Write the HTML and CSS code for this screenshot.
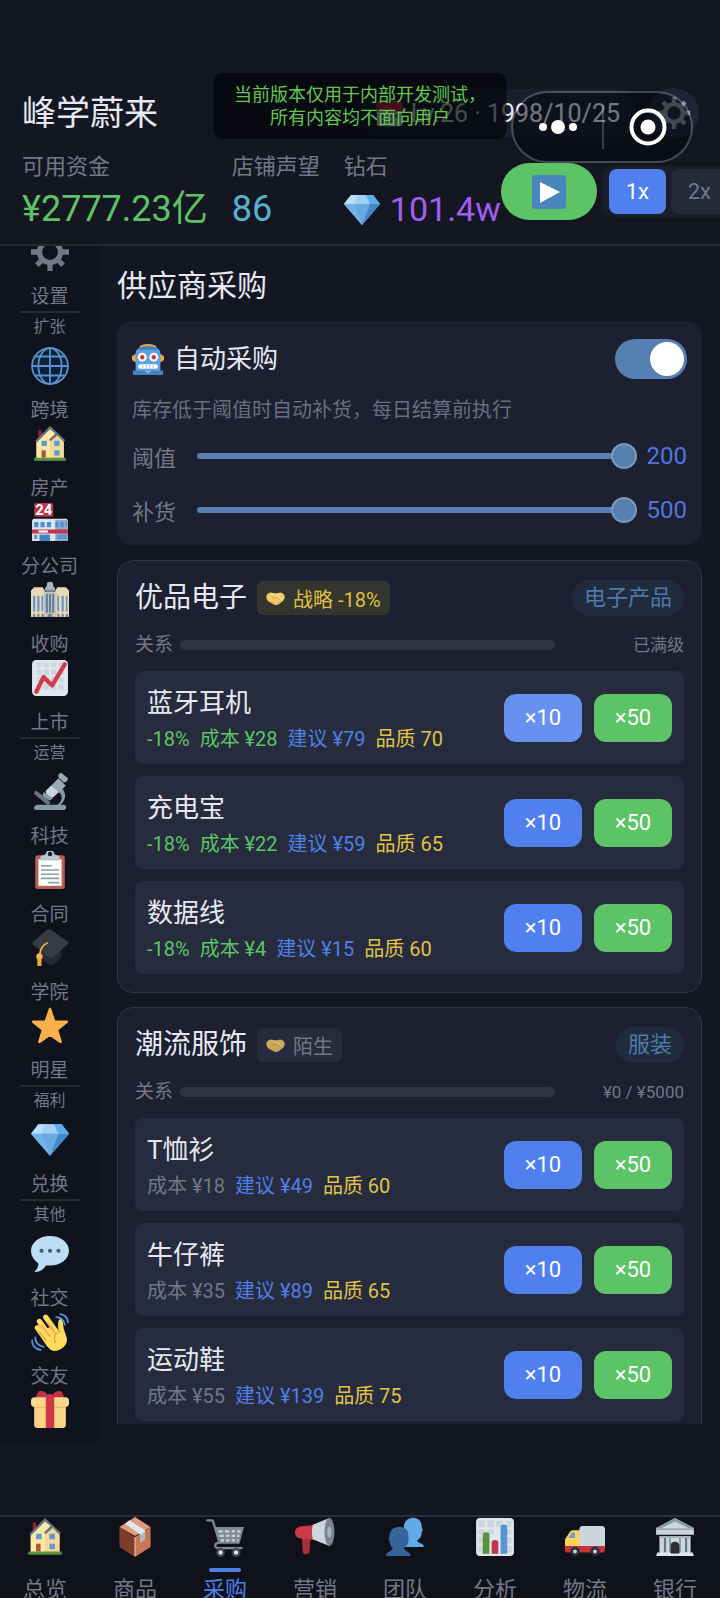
FILE: index.html
```html
<!DOCTYPE html>
<html lang="zh-CN">
<head>
    <meta charset="UTF-8">
    <meta name="viewport" content="width=device-width, initial-scale=1.0">
    <title>供应商采购</title>
    <link rel="stylesheet" href="styles.css">
</head>
<body>
    <!-- iconos compartidos -->
    <svg class="sprite" aria-hidden="true">
        <symbol id="i-gear" viewBox="0 0 36 36">
            <g fill="currentColor">
                <path d="M15.500 0h5v8h-5zM15.500 28h5v8h-5zM0 15.500h8v5H0zM28 15.500h8v5h-8z"/>
                <path d="M3.800 7.300l3.500-3.500 6 6-3.500 3.500zM22.700 26.200l3.500-3.500 6 6-3.500 3.500zM28.700 3.800l3.500 3.500-6 6-3.500-3.500zM9.800 22.700l3.500 3.500-6 6-3.500-3.500z"/>
                <path fill-rule="evenodd" d="M18 5.500a12.500 12.500 0 1 0 0 25 12.500 12.500 0 0 0 0-25zm0 5a7.500 7.500 0 1 1 0 15 7.500 7.500 0 0 1 0-15z"/>
            </g>
        </symbol>
        <symbol id="i-globe" viewBox="0 0 36 36">
            <circle cx="18" cy="18" r="17" fill="#0b2138"/>
            <g fill="none" stroke="#5b93cf" stroke-width="1.700">
                <circle cx="18" cy="18" r="17"/>
                <ellipse cx="18" cy="18" rx="11" ry="17"/>
                <path d="M18 1v34M1 18h34M4 9h28M4 27h28"/>
            </g>
        </symbol>
        <symbol id="i-house" viewBox="0 0 36 36">
            <path fill="#a0212e" d="M7 5h3v8H7z"/>
            <path fill="#ffe8a6" d="M5 32V15L18 2l13 12v18z"/>
            <path fill="#f6d996" d="M18 32V16l7-7 6 6v17z"/>
            <path fill="#66757f" d="M18 1L4 15l1.500 1.500L18 4l5 4-6 6 1.500 1.500L25 10l6 6 1.500-1.500z"/>
            <path fill="#5c913b" d="M3 31h30v3H3z"/>
            <path fill="#5a9bd8" d="M10 15h5v5h-5zM22 15h5v5h-5zM22 24h5v5h-5z"/>
            <path fill="#a5593b" d="M10 24h4v7h-4z"/>
        </symbol>
        <symbol id="i-store" viewBox="0 0 36 36">
            <rect x="3" y="0" width="18" height="13" rx="1.500" fill="#be3448"/>
            <path fill="#dde5ec" d="M1 17l1-2h32l1 2v19H1z"/>
            <path fill="#8fa9c4" d="M23 16h12v20H23z"/>
            <path fill="#4d8fd6" d="M3 18h4v5H3zM9 18h4v5H9zM15 18h4v5h-4zM23 18h3v5h-3zM28 18h3v5h-3zM33 18h1v5h-1z"/>
            <path fill="#c4344c" d="M1 25h34v4H1z"/>
            <path fill="#fff" d="M7 26h9v2H7z"/>
            <path fill="#3f83c8" d="M8 30h10v6H8z"/>
            <path fill="#5e95cf" d="M3 30h3v4H3zM25 30h9v4h-9z"/>
            <text x="4" y="11" class="store-num">24</text>
        </symbol>
        <symbol id="i-hall" viewBox="0 0 36 36">
            <path fill="#ead9b8" d="M0 9l3-3h8l2 3v25H0zM23 9l2-3h8l3 3v25H23z"/>
            <path fill="#c9c5bd" d="M12 10h12v24H12z"/>
            <path fill="#aab8c2" d="M13 9c0-3 2-5 5-5s5 2 5 5zM15 3c0-3 6-3 6 0v2h-6z"/>
            <path fill="#8795a0" d="M14 8h8v2h-8z"/>
            <path fill="#5c96cf" d="M2 14h2v15H2zM6 14h2v15H6zM10 14h1.500v15H10zM25 14h1.500v15H25zM29 14h2v15h-2zM33 14h1.500v15H33z"/>
            <path fill="#5f7f9f" d="M14 12h2v18h-2zM17 12h2v18h-2zM20 12h2v18h-2z"/>
            <path fill="#7f868c" d="M2 31h2v3H2zM6 31h2v3H6zM10 31h2v3h-2zM16 31h4v3h-4zM25 31h2v3h-2zM29 31h2v3h-2zM33 31h2v3h-2z"/>
        </symbol>
        <symbol id="i-trend" viewBox="0 0 36 36">
            <rect x="1" y="1" width="34" height="34" rx="4" fill="#e1e8ed"/>
            <path fill="#ccd6dd" d="M5 3h5v5H5zM12 3h5v5h-5zM19 3h5v5h-5zM26 3h5v5h-5zM5 10h5v5H5zM12 10h5v5h-5zM19 10h5v5h-5zM26 10h5v5h-5zM5 17h5v5H5zM12 17h5v5h-5zM19 17h5v5h-5zM26 17h5v5h-5zM5 24h5v5H5zM12 24h5v5h-5zM19 24h5v5h-5zM26 24h5v5h-5z"/>
            <path fill="none" stroke="#d03a4b" stroke-width="4" stroke-linecap="round" stroke-linejoin="round" d="M5 31l7-14 8 8L32 5"/>
        </symbol>
        <symbol id="i-scope" viewBox="0 0 36 36">
            <path fill="#8899a6" d="M6 30h19c6-4 5-11 0-12l2-5c7 4 7 12 1 17h3c3 0 3 5 0 5H5c-3 0-3-4 1-5z"/>
            <path stroke="#66757f" stroke-width="4" stroke-linecap="round" d="M5 19l11 9"/>
            <path fill="#9aaab4" d="M14 17l12-12 7 7-12 11c-3 1-7-2-7-6z"/>
            <path fill="#ccd6dd" d="M14 17l5-5 7 6-5 5c-4 0-7-2-7-6z"/>
            <path fill="#9aaab4" d="M26 1l3-1 6 5-1 3-3 1-5-5z"/>
            <path fill="#8899a6" d="M12 18l9 6-3 2c-4-1-6-3-7-5z"/>
        </symbol>
        <symbol id="i-clip" viewBox="0 0 36 36">
            <rect x="4" y="4" width="28" height="32" rx="2.500" fill="#b5604f"/>
            <path fill="#fff" d="M7 8h22v25H7z"/>
            <path fill="#bac6ce" d="M9 5l5-2a4 4 0 0 1 8 0l5 2v4H9z"/>
            <circle cx="18" cy="2.800" r="2.200" fill="#1d242c"/>
            <path stroke="#8b9ba9" stroke-width="1.600" stroke-linecap="round" d="M10 14h9M10 18h16M10 22h16M10 26h16M17 30h9"/>
        </symbol>
        <symbol id="i-cap" viewBox="0 0 36 36">
            <path fill="#242a2f" d="M9 17l19 1 1 8c-3 5-8 9-12 8-4-3-8-6-8-9z"/>
            <path fill="#353c42" d="M18 0l17 12c1 1 0 2-1 3L21 27c-2 1-3 1-4 0L2 15c-1-1-1-2 0-3L15 1c1-1 2-1 3-1z"/>
            <path fill="none" stroke="#efb04e" stroke-width="1.700" d="M16 13c-5 2-7 5-8 13"/>
            <circle cx="8" cy="26" r="3" fill="#f4b350"/>
            <path fill="#e9a843" d="M6 28h4v7H6z"/>
        </symbol>
        <symbol id="i-star" viewBox="0 0 36 36">
            <path fill="#f8b04a" stroke="#f8b04a" stroke-width="2.500" stroke-linejoin="round" d="M18 2l4 12h12l-9.500 7.500L28 33l-10-7-10 7 3.500-11.500L2 14h12z"/>
        </symbol>
        <symbol id="i-gem" viewBox="0 0 36 36">
            <path fill="#8ccaf7" d="M7 3h22l7 9-18 21L0 12z"/>
            <path fill="#bdddf4" d="M7 3h7l-4 9H0z"/>
            <path fill="#9fd0f5" d="M14 3h8l4 9H10z"/>
            <path fill="#5dadec" d="M22 3h7l7 9H26z"/>
            <path fill="#72b3ea" d="M0 12h10l8 21z"/>
            <path fill="#6aa9e3" d="M10 12h16l-8 21z"/>
            <path fill="#4289c9" d="M26 12h10L18 33z"/>
        </symbol>
        <symbol id="i-bubble" viewBox="0 0 36 36">
            <path fill="#bdddf4" d="M18 1c10 0 18 6 18 14s-8 14-18 14h-4c-2 4-6 6-10 6-1 0-1-1 0-1 2-2 3-4 3-7-4-3-7-7-7-12C0 7 8 1 18 1z"/>
            <g fill="#3f6385"><circle cx="10" cy="15" r="2"/><circle cx="18" cy="15" r="2"/><circle cx="26" cy="15" r="2"/></g>
        </symbol>
        <symbol id="i-wave" viewBox="0 0 36 36">
            <path fill="none" stroke="#ffdc5d" stroke-width="5" stroke-linecap="round" d="M6 14l8 11M8 8l10 14M14 4l10 14"/>
            <path fill="#ffdc5d" d="M7 17L22 12l4 5c0-4-1-9 1-11 2-1 3 0 3 2l1 7 3 9c1 7-6 12-12 12-5-1-9-6-15-19z"/>
            <path fill="none" stroke="#ef9645" stroke-width="1.200" stroke-linecap="round" d="M10 12l8 10M15 9l8 10M8 18l6 8M28 17c-5 2-7 6-5 11"/>
            <path fill="none" stroke="#5496dc" stroke-width="1.700" stroke-linecap="round" d="M28 1c4 1 7 4 7 8M24 4c4 0 7 3 8 7M1 26c0 5 3 8 8 9M4 23c0 5 3 8 8 9"/>
        </symbol>
        <symbol id="i-gift" viewBox="0 0 36 36">
            <path fill="#be3042" d="M18 6C13-1 8-1 7 1 5 3 5 6 4 8h28c-1-2-1-5-3-7-1-2-6-2-11 5z"/>
            <path fill="#f9d585" d="M3 15h30v17c0 2-1 3-3 3H6c-2 0-3-1-3-3z"/>
            <path fill="#efb86b" d="M3 14h30v2H3z"/>
            <rect x="0" y="6" width="36" height="9" rx="3.500" fill="#fdd888"/>
            <path fill="#d0384a" d="M14 5c2-3 6-3 8 0v30h-8z"/>
        </symbol>
        <symbol id="i-robot" viewBox="0 0 36 36">
            <path fill="#f4a83a" d="M8 5c3-5 17-5 20 0zM1 14l4-2v10l-4-2c-2-2-2-4 0-6zM35 14l-4-2v10l4-2c2-2 2-4 0-6z"/>
            <path fill="#5da2df" d="M4 12c0-5 5-9 14-9s14 4 14 9v20H4z"/>
            <path fill="#4382bd" d="M8 6c3-3 17-3 20 0l1 2H7zM1 31h34v5H1z"/>
            <path fill="#79b8ef" d="M14 31h8l-4 4z"/>
            <g fill="#fff"><circle cx="11.500" cy="16" r="5"/><circle cx="24.500" cy="16" r="5"/><rect x="7" y="24" width="22" height="5" rx="2.500"/></g>
            <g fill="#c63a45"><circle cx="11.500" cy="16" r="2.500"/><circle cx="24.500" cy="16" r="2.500"/></g>
            <path stroke="#a6bfd6" d="M12 24v5M16 24v5M20 24v5M24 24v5"/>
        </symbol>
        <symbol id="i-shake" viewBox="0 0 36 36">
            <path fill="#f3c968" d="M1 12c3-4 7-6 10-5l7 2 7-2c4-1 7 1 10 5 1 4 0 8-2 10l-9 7c-3 2-7 2-10 0L4 23c-3-3-4-7-3-11z"/>
            <path fill="#ffdc7a" d="M9 10c5-3 10-2 13 0l8 9c1 3-2 4-3 2l-8-6c-3 3-7 3-7 0z"/>
            <path fill="none" stroke="#c88a3e" stroke-width="1.500" d="M18 9l-6 6c1 3 5 2 7 0l9 7M9 24l3 4M14 25l3 4M22 25l2 2"/>
        </symbol>
        <symbol id="i-box" viewBox="0 0 36 36">
            <path fill="#e09b7b" d="M18 0l14 9-14 8L4 9z"/>
            <path fill="#7d3d28" d="M4 9l14 9v18L4 27z"/>
            <path fill="#c87858" d="M32 9L18 18v18l14-9z"/>
            <path fill="#e1e8ed" d="M9 6l4-3 14 9v8l-4 3v-7z"/>
            <path fill="#a9bbc9" d="M23 16l4-3v7l-4 3z"/>
            <path stroke="#efc0a4" d="M18 18v17"/>
        </symbol>
        <symbol id="i-cart" viewBox="0 0 36 36">
            <path fill="none" stroke="#7f8a93" stroke-width="2" stroke-linecap="round" stroke-linejoin="round" d="M2 3h5l6 20c-5 0-5 5-1 5h21"/>
            <path fill="#7f8a93" d="M8 9h27l-4 15H13z"/>
            <path fill="#c9d4da" d="M12 12h4v2h-4zM18 12h4v2h-4zM24 12h3v2h-3zM29 12h3v2h-3zM13 16h4v2h-4zM19 16h3v2h-3zM24 16h3v2h-3zM29 16h2v2h-2zM14 20h3v2h-3zM19 20h3v2h-3zM24 20h3v2h-3zM29 20h1v2h-1z"/>
            <g fill="#dce4ea" stroke="#3c444b" stroke-width="2"><circle cx="14" cy="32" r="3"/><circle cx="28" cy="32" r="3"/></g>
        </symbol>
        <symbol id="i-horn" viewBox="0 0 36 36">
            <path fill="#a92d3b" d="M6 17h8l-1 15c-1 2-6 2-6 0z"/>
            <path fill="#ca3b49" d="M3 9c3-1 10-1 15-2v14c-5-1-11-1-15-2-4-2-4-8 0-10z"/>
            <path fill="#ccd6dd" d="M16 7l15-6v25l-15-6c-1-4-1-9 0-13z"/>
            <ellipse cx="31" cy="13.500" rx="4.500" ry="12.500" fill="#758490"/>
            <ellipse cx="31" cy="13.500" rx="2" ry="5" fill="#a5b4bf"/>
        </symbol>
        <symbol id="i-team" viewBox="0 0 36 36">
            <path fill="#62a9e8" d="M17 9c0-11 16-11 16-1l1 4-1 2c0 4-2 6-4 7 0 3 6 2 6 6H15V14z"/>
            <path fill="#36659a" d="M4 17c0-11 18-11 17 0 1 5-1 10-4 11 0 3 6 3 6 7H1c0-4 6-4 6-7-2-1-3-5-3-7l-1-1z"/>
        </symbol>
        <symbol id="i-chart" viewBox="0 0 36 36">
            <rect x="1" y="1" width="34" height="34" rx="3.500" fill="#e1e8ed"/>
            <path fill="#ccd6dd" d="M3 3h6v6H3zM11 3h6v6h-6zM19 3h6v6h-6zM28 3h5v6h-5zM3 11h6v5H3zM11 11h6v5h-6zM28 11h5v5h-5zM3 18h6v6H3zM28 18h5v6h-5zM3 26h6v6H3zM28 26h5v6h-5z"/>
            <path fill="#5c913b" d="M7 33V16c0-3 6-3 6 0v17z"/>
            <path fill="#be3448" d="M15 33V23c0-3 6-3 6 0v10z"/>
            <path fill="#5496d4" d="M23 33V9c0-3 6-3 6 0v24z"/>
        </symbol>
        <symbol id="i-truck" viewBox="0 0 36 36">
            <path fill="#c9303f" d="M0 25h36v4c0 2-1 3-2 3H2c-2 0-2-2-2-3z"/>
            <path fill="#ffcf58" d="M0 26v-6l4-6c1-2 3-2 4-2h6v14z"/>
            <path fill="#63a3da" d="M3 19l3-5h3v5z"/>
            <path fill="#ccd6dd" d="M13 11c0-2 1-3 3-3h17c2 0 3 1 3 3v15H13z"/>
            <g fill="#ccd6dd" stroke="#292f33" stroke-width="2.500"><circle cx="9" cy="31" r="3"/><circle cx="27" cy="31" r="3"/></g>
        </symbol>
        <symbol id="i-bank" viewBox="0 0 36 36">
            <path fill="#ccd6dd" d="M18 1l17 9v6H1v-6zM4 17h28v17H4z"/>
            <path fill="#a5b1ba" d="M1 10h34v2H1zM4 17h28v2H4z"/>
            <path fill="#8899a6" d="M18 1L1 10h5l12-6 12 6h5z"/>
            <path fill="#66757f" d="M8 19h2v13H8zM13 19h1v13h-1zM22 19h1v13h-1zM27 19h2v13h-2z"/>
            <path fill="#292f33" d="M14 33v-7c0-5 8-5 8 0v7z"/>
            <path fill="#e1e8ed" d="M2 32h11l2 1h6l2-1h11l1 3H1z"/>
        </symbol>
        <symbol id="i-date" viewBox="0 0 36 36">
            <rect x="1" y="2" width="34" height="33" rx="3" fill="#dfe6eb"/>
            <path fill="#dd2e44" d="M1 2h34v13H1z"/>
            <path fill="#66757f" d="M7 19h5v5H7zM16 19h5v5h-5zM25 19h5v5h-5zM7 27h5v5H7zM16 27h5v5h-5z"/>
        </symbol>
    </svg>

    <header class="topbar">
        <div class="topbar-row">
            <h1 class="company">峰学蔚来</h1>
            <div class="date-pill"><svg class="date-icon"><use href="#i-date"/></svg>Lv.26 · 1998/10/25</div>
            <button class="gear-btn" type="button" aria-label="设置"><svg><use href="#i-gear"/></svg></button>
        </div>
        <div class="stats">
            <div class="stat"><span class="stat-label">可用资金</span><span class="stat-value money">¥2777.23亿</span></div>
            <div class="stat"><span class="stat-label">店铺声望</span><span class="stat-value fame">86</span></div>
            <div class="stat"><span class="stat-label">钻石</span><span class="stat-value gems"><svg class="gem"><use href="#i-gem"/></svg>101.4w</span></div>
            <div class="controls">
                <button class="play" type="button" aria-label="播放">
                    <svg viewBox="0 0 34 34"><rect width="34" height="34" rx="3" fill="#4a86be"/><path fill="#fff" d="M8 7l20 10L8 28z"/></svg>
                </button>
                <div class="speeds">
                    <button class="speed active" type="button">1x</button>
                    <button class="speed" type="button">2x</button>
                </div>
            </div>
        </div>
    </header>

    <div class="layout">
        <nav class="sidebar">
            <div class="side-list">
                <a class="side-item" href="#"><svg><use href="#i-gear"/></svg><span>设置</span></a>
                <div class="side-group">扩张</div>
                <a class="side-item" href="#"><svg><use href="#i-globe"/></svg><span>跨境</span></a>
                <a class="side-item" href="#"><svg><use href="#i-house"/></svg><span>房产</span></a>
                <a class="side-item" href="#"><svg><use href="#i-store"/></svg><span>分公司</span></a>
                <a class="side-item" href="#"><svg><use href="#i-hall"/></svg><span>收购</span></a>
                <a class="side-item" href="#"><svg><use href="#i-trend"/></svg><span>上市</span></a>
                <div class="side-group">运营</div>
                <a class="side-item" href="#"><svg><use href="#i-scope"/></svg><span>科技</span></a>
                <a class="side-item" href="#"><svg><use href="#i-clip"/></svg><span>合同</span></a>
                <a class="side-item" href="#"><svg><use href="#i-cap"/></svg><span>学院</span></a>
                <a class="side-item" href="#"><svg><use href="#i-star"/></svg><span>明星</span></a>
                <div class="side-group">福利</div>
                <a class="side-item" href="#"><svg><use href="#i-gem"/></svg><span>兑换</span></a>
                <div class="side-group">其他</div>
                <a class="side-item" href="#"><svg><use href="#i-bubble"/></svg><span>社交</span></a>
                <a class="side-item" href="#"><svg><use href="#i-wave"/></svg><span>交友</span></a>
                <a class="side-item" href="#"><svg><use href="#i-gift"/></svg></a>
            </div>
        </nav>

        <main class="content">
            <h2 class="page-title">供应商采购</h2>

            <section class="auto-card">
                <div class="auto-head">
                    <svg class="robot"><use href="#i-robot"/></svg>
                    <label class="auto-name" for="auto_buy">自动采购</label>
                    <input type="checkbox" id="auto_buy" class="switch" checked>
                </div>
                <p class="auto-desc">库存低于阈值时自动补货，每日结算前执行</p>
                <div class="slider-row">
                    <label for="threshold">阈值</label>
                    <input type="range" id="threshold" class="slider" min="0" max="200" value="200">
                    <span class="slider-value">200</span>
                </div>
                <div class="slider-row">
                    <label for="restock">补货</label>
                    <input type="range" id="restock" class="slider" min="0" max="500" value="500">
                    <span class="slider-value">500</span>
                </div>
            </section>

            <section class="supplier">
                <div class="supplier-head">
                    <h3>优品电子</h3>
                    <span class="badge gold"><svg><use href="#i-shake"/></svg>战略 -18%</span>
                    <span class="tag">电子产品</span>
                </div>
                <div class="relation"><span>关系</span><div class="bar"></div><span class="relation-value">已满级</span></div>
                <div class="product">
                    <div class="info">
                        <h4>蓝牙耳机</h4>
                        <div class="meta"><span class="green">-18%</span><span class="green">成本 ¥28</span><span class="blue">建议 ¥79</span><span class="yellow">品质 70</span></div>
                    </div>
                    <button class="buy buy-10 pressed" type="button">×10</button>
                    <button class="buy buy-50" type="button">×50</button>
                </div>
                <div class="product">
                    <div class="info">
                        <h4>充电宝</h4>
                        <div class="meta"><span class="green">-18%</span><span class="green">成本 ¥22</span><span class="blue">建议 ¥59</span><span class="yellow">品质 65</span></div>
                    </div>
                    <button class="buy buy-10" type="button">×10</button>
                    <button class="buy buy-50" type="button">×50</button>
                </div>
                <div class="product">
                    <div class="info">
                        <h4>数据线</h4>
                        <div class="meta"><span class="green">-18%</span><span class="green">成本 ¥4</span><span class="blue">建议 ¥15</span><span class="yellow">品质 60</span></div>
                    </div>
                    <button class="buy buy-10" type="button">×10</button>
                    <button class="buy buy-50" type="button">×50</button>
                </div>
            </section>

            <section class="supplier">
                <div class="supplier-head">
                    <h3>潮流服饰</h3>
                    <span class="badge"><svg><use href="#i-shake"/></svg>陌生</span>
                    <span class="tag">服装</span>
                </div>
                <div class="relation"><span>关系</span><div class="bar"></div><span class="relation-value">¥0 / ¥5000</span></div>
                <div class="product">
                    <div class="info">
                        <h4>T恤衫</h4>
                        <div class="meta"><span>成本 ¥18</span><span class="blue">建议 ¥49</span><span class="yellow">品质 60</span></div>
                    </div>
                    <button class="buy buy-10" type="button">×10</button>
                    <button class="buy buy-50" type="button">×50</button>
                </div>
                <div class="product">
                    <div class="info">
                        <h4>牛仔裤</h4>
                        <div class="meta"><span>成本 ¥35</span><span class="blue">建议 ¥89</span><span class="yellow">品质 65</span></div>
                    </div>
                    <button class="buy buy-10" type="button">×10</button>
                    <button class="buy buy-50" type="button">×50</button>
                </div>
                <div class="product">
                    <div class="info">
                        <h4>运动鞋</h4>
                        <div class="meta"><span>成本 ¥55</span><span class="blue">建议 ¥139</span><span class="yellow">品质 75</span></div>
                    </div>
                    <button class="buy buy-10" type="button">×10</button>
                    <button class="buy buy-50" type="button">×50</button>
                </div>
            </section>
        </main>
    </div>

    <nav class="tabbar">
        <a class="tab" href="#"><svg><use href="#i-house"/></svg><span>总览</span></a>
        <a class="tab" href="#"><svg><use href="#i-box"/></svg><span>商品</span></a>
        <a class="tab active" href="#"><svg><use href="#i-cart"/></svg><span>采购</span></a>
        <a class="tab" href="#"><svg><use href="#i-horn"/></svg><span>营销</span></a>
        <a class="tab" href="#"><svg><use href="#i-team"/></svg><span>团队</span></a>
        <a class="tab" href="#"><svg><use href="#i-chart"/></svg><span>分析</span></a>
        <a class="tab" href="#"><svg><use href="#i-truck"/></svg><span>物流</span></a>
        <a class="tab" href="#"><svg><use href="#i-bank"/></svg><span>银行</span></a>
    </nav>

    <!-- capas flotantes -->
    <div class="toast">当前版本仅用于内部开发测试，<br>所有内容均不面向用户</div>
    <div class="capsule">
        <button type="button" aria-label="更多"><svg class="dots" viewBox="0 0 40 16"><g fill="#fff"><circle cx="5" cy="8" r="4"/><circle cx="20" cy="8" r="7"/><circle cx="35" cy="8" r="4"/></g></svg></button>
        <button type="button" aria-label="关闭"><svg class="ring" viewBox="0 0 38 38"><circle cx="19" cy="19" r="16.500" fill="none" stroke="#fff" stroke-width="4"/><circle cx="19" cy="19" r="7.500" fill="#fff"/></svg></button>
    </div>
</body>
</html>
```

FILE: styles.css
```css
* {
    box-sizing: border-box;
}
body {
    margin: 0;
    height: 100vh;
    overflow: hidden;
    display: flex;
    flex-direction: column;
    background-color: #141722;
    color: #e6e9f2;
    font-family: Roboto, "Noto Sans CJK SC", sans-serif;
    font-size: 20px;
}
h1, h2, h3, h4, p {
    margin: 0;
    font-weight: normal;
}
button {
    border: none;
    padding: 0;
    font-family: inherit;
    cursor: pointer;
}
a {
    text-decoration: none;
    color: inherit;
}
svg {
    display: block;
    flex: none;
}
.sprite {
    position: absolute;
    width: 0;
    height: 0;
}
.store-num {
    font: bold 14px Roboto, sans-serif;
    fill: #fff;
}

/* cabecera */
.topbar {
    flex: none;
    padding: 88px 21px 8px 22px;
    border-bottom: 2px solid #252936;
}
.topbar-row {
    display: flex;
    align-items: center;
    height: 50px;
}
.company {
    flex: 1;
    font-size: 34px;
    line-height: 50px;
}
.date-pill {
    display: flex;
    align-items: center;
    height: 48px;
    padding: 0 14px;
    margin-right: 15px;
    border-radius: 16px;
    background-color: #1b1f2d;
    color: #e6e9f2;
    font-size: 25px;
}
.date-icon {
    width: 27px;
    height: 27px;
    margin-right: 8px;
}
.gear-btn {
    display: flex;
    align-items: center;
    justify-content: center;
    width: 50px;
    height: 50px;
    border-radius: 50%;
    background-color: #1f2536;
    color: #858a96;
}
.gear-btn svg {
    width: 32px;
    height: 32px;
}
.stats {
    display: flex;
    margin-top: 15px;
}
.stat {
    flex: none;
    margin-right: 24px;
}
.stat:nth-child(3) {
    margin-right: 0;
}
.stat-label {
    display: block;
    color: #737787;
    font-size: 22px;
    line-height: 27px;
}
.stat-value {
    display: flex;
    align-items: center;
    padding-top: 3px;
    font-size: 36px;
    line-height: 53px;
}
.money { color: #5cc466; }
.fame { color: #56b1cf; }
.gems {
    color: #a35cf0;
    font-size: 34px;
}
.gem {
    width: 36px;
    height: 36px;
    margin-right: 10px;
}
.controls {
    display: flex;
    flex: none;
    align-items: center;
    gap: 6px;
    height: 77px;
}
.play {
    display: flex;
    align-items: center;
    justify-content: center;
    width: 96px;
    height: 57px;
    border-radius: 29px;
    background-color: #5cc466;
}
.play svg {
    width: 34px;
    height: 34px;
}
.speeds {
    display: flex;
    gap: 5px;
    padding: 3px 6px;
    border-radius: 10px;
    background-color: #1a1e2b;
}
.speed {
    width: 57px;
    height: 45px;
    border-radius: 8px;
    background-color: #252a3a;
    color: #737787;
    font-size: 22px;
}
.speed.active {
    background-color: #4f80ee;
    color: #fff;
}

/* cuerpo */
.layout {
    flex: 1;
    min-height: 0;
    display: flex;
    margin-bottom: 73px;
}
.sidebar {
    flex: none;
    width: 99px;
    overflow: hidden;
    background-color: #0f131e;
}
.side-list {
    margin-top: -13px;
}
.side-item {
    display: flex;
    flex-direction: column;
    align-items: center;
    gap: 12px;
    height: 78px;
    color: #737787;
    font-size: 19px;
    line-height: 28px;
}
.side-item svg {
    width: 38px;
    height: 38px;
}
.side-group {
    width: 60px;
    height: 36px;
    margin: 0 auto;
    border-top: 2px solid #262a36;
    color: #737787;
    font-size: 16px;
    line-height: 28px;
    text-align: center;
}
.content {
    flex: 1;
    min-width: 0;
    overflow: hidden;
    margin-bottom: 18px;
    padding: 20px 18px 0;
}
.page-title {
    margin-bottom: 15px;
    font-size: 30px;
    line-height: 40px;
}
.auto-card {
    margin-bottom: 15px;
    padding: 18px 15px 20px;
    border-radius: 16px;
    background-color: #1c2030;
}
.auto-head {
    display: flex;
    align-items: center;
    height: 40px;
}
.robot {
    width: 32px;
    height: 32px;
    margin-right: 10px;
}
.auto-name {
    flex: 1;
    font-size: 26px;
    line-height: 42px;
}
.switch {
    appearance: none;
    width: 72px;
    height: 40px;
    margin: 0;
    padding: 3px;
    border-radius: 20px;
    background-color: #5680b1;
}
.switch::before {
    content: "";
    display: block;
    width: 34px;
    height: 34px;
    margin-left: auto;
    border-radius: 50%;
    background-color: #fff;
}
.auto-desc {
    margin: 16px 0;
    color: #6a6e7e;
    font-size: 20px;
    line-height: 30px;
}
.slider-row {
    display: flex;
    align-items: center;
    gap: 10px;
    height: 30px;
}
.slider-row + .slider-row {
    margin-top: 24px;
}
.slider-row label {
    width: 55px;
    color: #737787;
    font-size: 22px;
}
.slider {
    appearance: none;
    flex: 1;
    min-width: 0;
    height: 6px;
    margin: 0;
    border-radius: 3px;
    background-color: #5680b1;
}
.slider::-webkit-slider-thumb {
    appearance: none;
    width: 26px;
    height: 26px;
    border: 2px solid #7f97b6;
    border-radius: 50%;
    background-color: #5680b1;
}
.slider-value {
    color: #5075dd;
    font-size: 24px;
}

/* proveedores */
.supplier {
    margin-bottom: 14px;
    padding: 18px 17px;
    border: 1px solid #303546;
    border-radius: 16px;
    background-color: #1c2030;
}
.supplier-head {
    display: flex;
    align-items: center;
    height: 38px;
}
.supplier-head h3 {
    font-size: 28px;
    line-height: 40px;
}
.badge {
    display: flex;
    align-items: center;
    gap: 8px;
    height: 34px;
    margin-left: 10px;
    padding: 0 9px;
    border-radius: 6px;
    background-color: #272b3b;
    color: #737787;
}
.badge svg {
    width: 19px;
    height: 19px;
    opacity: 0.8;
}
.badge.gold {
    background-color: #353530;
    color: #ddc03c;
}
.badge.gold svg {
    opacity: 1;
}
.tag {
    margin-left: auto;
    padding: 0 12px;
    border-radius: 18px;
    background-color: #212b3e;
    color: #4f7aa9;
    font-size: 22px;
    line-height: 36px;
}
.relation {
    display: flex;
    align-items: center;
    gap: 7px;
    margin: 14px 0 12px;
    color: #737787;
    font-size: 19px;
    line-height: 28px;
}
.bar {
    flex: 1;
    height: 10px;
    border-radius: 5px;
    background-color: #303344;
}
.relation-value {
    width: 122px;
    font-size: 17px;
    text-align: right;
}
.product {
    display: flex;
    align-items: center;
    gap: 12px;
    height: 93px;
    padding: 0 12px;
    border-radius: 8px;
    background-color: #262b3d;
}
.product + .product {
    margin-top: 12px;
}
.info {
    flex: 1;
    padding-top: 5px;
}
.info h4 {
    font-size: 26px;
    line-height: 38px;
}
.meta {
    display: flex;
    gap: 10px;
    color: #737787;
    font-size: 20px;
    line-height: 34px;
}
.green { color: #5cc466; }
.blue { color: #5080e6; }
.yellow { color: #e0c445; }
.buy {
    width: 78px;
    height: 48px;
    border-radius: 12px;
    color: #fff;
    font-size: 22px;
}
.buy-10 {
    background-color: #4f80ee;
}
.buy-10.pressed {
    background-color: #6791ee;
}
.buy-50 {
    background-color: #5cc466;
}

/* barra inferior */
.tabbar {
    flex: none;
    display: flex;
    height: 83px;
    overflow: hidden;
    border-top: 2px solid #2b2e3a;
    background-color: #0f121b;
}
.tab {
    flex: 1;
    display: flex;
    flex-direction: column;
    align-items: center;
    color: #737787;
    font-size: 22px;
    line-height: 32px;
}
.tab svg {
    width: 40px;
    height: 40px;
}
.tab::after {
    content: "";
    order: 1;
    flex: none;
    width: 32px;
    height: 4px;
    margin-top: 11px;
    border-radius: 2px;
}
.tab span {
    order: 2;
    margin-top: 2px;
}
.tab.active {
    color: #5080e6;
}
.tab.active::after {
    background-color: #5080e6;
}

/* avisos por encima de la cabecera */
.toast {
    position: absolute;
    top: 73px;
    left: 50%;
    width: 293px;
    padding: 10px 0;
    transform: translateX(-50%);
    border-radius: 9px;
    background-color: rgba(4, 6, 10, 0.7);
    color: #62c74f;
    font-size: 18px;
    line-height: 23px;
    text-align: center;
}
.capsule {
    position: absolute;
    top: 91px;
    right: 27px;
    display: flex;
    width: 182px;
    height: 72px;
    border: 2px solid rgba(255, 255, 255, 0.22);
    border-radius: 36px;
    background-color: rgba(2, 4, 9, 0.5);
    background-clip: padding-box;
}
.capsule button {
    flex: 1;
    display: flex;
    align-items: center;
    justify-content: center;
    background: none;
}
.capsule button + button::before {
    content: "";
    width: 2px;
    height: 44px;
    margin-right: 25px;
    background-color: rgba(255, 255, 255, 0.2);
}
.capsule button + button {
    justify-content: flex-start;
}
.dots {
    width: 40px;
    height: 16px;
}
.ring {
    width: 38px;
    height: 38px;
}
```
